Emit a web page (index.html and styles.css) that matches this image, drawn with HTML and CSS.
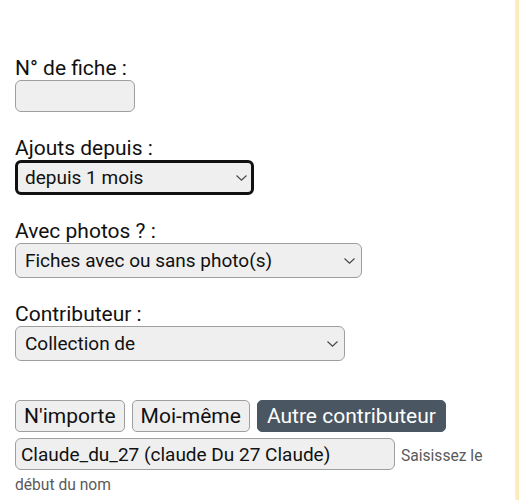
FILE: index.html
```html
<!DOCTYPE html>
<html lang="fr">
<head>
<meta charset="utf-8">
<title>Recherche</title>
<link rel="stylesheet" href="styles.css">
</head>
<body>
<div class="page">
  <form class="form">
    <div class="field">
      <label class="label" for="num">N° de fiche :</label>
      <input class="input input-num" id="num" type="text">
    </div>
    <div class="field">
      <label class="label" for="ajout">Ajouts depuis :</label>
      <span class="select-wrap sw-ajout">
        <select class="select focused" id="ajout"><option>depuis 1 mois</option></select>
        <svg class="chev" width="11" height="6" viewBox="0 0 11 6"><path d="M0.5 0.5 L5.5 5.2 L10.5 0.5" fill="none" stroke="#444" stroke-width="1.1"/></svg>
      </span>
    </div>
    <div class="field">
      <label class="label" for="photos">Avec photos ? :</label>
      <span class="select-wrap sw-photos">
        <select class="select" id="photos"><option>Fiches avec ou sans photo(s)</option></select>
        <svg class="chev" width="11" height="6" viewBox="0 0 11 6"><path d="M0.5 0.5 L5.5 5.2 L10.5 0.5" fill="none" stroke="#444" stroke-width="1.1"/></svg>
      </span>
    </div>
    <div class="field">
      <label class="label" for="contrib">Contributeur :</label>
      <span class="select-wrap sw-contrib">
        <select class="select" id="contrib"><option>Collection de</option></select>
        <svg class="chev" width="11" height="6" viewBox="0 0 11 6"><path d="M0.5 0.5 L5.5 5.2 L10.5 0.5" fill="none" stroke="#444" stroke-width="1.1"/></svg>
      </span>
    </div>
    <div class="buttons">
      <button type="button" class="btn">N'importe</button>
      <button type="button" class="btn">Moi-même</button>
      <button type="button" class="btn btn-active">Autre contributeur</button>
    </div>
    <div class="name-row">
      <input class="input input-name" type="text" value="Claude_du_27 (claude Du 27 Claude)"><span class="hint">Saisissez le début du nom</span>
    </div>
  </form>
  <div class="stripe"></div>
</div>
</body>
</html>
```
FILE: styles.css
```css
html, body {
  margin: 0;
  padding: 0;
  background: #fff;
  overflow: hidden;
}
body {
  font-family: Roboto, "Noto Sans", sans-serif;
  color: #111;
}
.page {
  display: flex;
  width: 519px;
  height: 500px;
  overflow: hidden;
}
.form {
  flex: 1;
  min-width: 0;
  padding: 57px 0 0 15px;
}
.field {
  display: flex;
  flex-direction: column;
  align-items: flex-start;
  margin-bottom: 25px;
}
.label {
  font-size: 21px;
  line-height: 23px;
  color: #111;
}
.input {
  box-sizing: border-box;
  background: #efefef;
  border: 1px solid #9e9e9e;
  border-radius: 6px;
  font-family: Roboto, sans-serif;
  font-size: 19px;
  color: #111;
  margin: 0;
}
.input-num {
  width: 120px;
  height: 32px;
}
.select-wrap {
  position: relative;
  display: inline-block;
}
.select {
  -webkit-appearance: none;
  appearance: none;
  box-sizing: border-box;
  background: #efefef;
  border: 1px solid #9e9e9e;
  border-radius: 6px;
  font-family: Roboto, sans-serif;
  font-size: 19px;
  color: #111;
  padding: 0 9px;
  height: 35px;
  margin: 0;
  display: block;
}
.select.focused {
  border: 3px solid #111;
  padding-left: 7px;
}
.sw-ajout .select { width: 239px; }
.sw-photos .select { width: 347px; }
.sw-contrib .select { width: 330px; }
.chev {
  position: absolute;
  right: 7px;
  top: 15px;
}
.buttons {
  display: flex;
  gap: 6px;
  margin-top: 39px;
}
.btn {
  box-sizing: border-box;
  height: 32px;
  background: #efefef;
  border: 1px solid #9e9e9e;
  border-radius: 5px;
  font-family: Roboto, sans-serif;
  font-size: 21px;
  color: #111;
  padding: 0 8px;
  margin: 0;
}
.btn + .btn {
  margin-left: 1px;
}
.btn-active {
  background: #4a5661;
  border-color: #4a5661;
  color: #fff;
  padding: 0 9px;
}
.name-row {
  margin-top: 6px;
  font-size: 21px;
  line-height: 27px;
  padding-right: 20px;
}
.input-name {
  width: 380px;
  height: 32px;
  padding: 0 5px;
}
.hint {
  font-size: 15.6px;
  color: #5a5a5a;
  margin-left: 6px;
}
.stripe {
  width: 4px;
  flex: none;
  background: linear-gradient(to right, #fdf1cf, #fbe6ad);
}
```
